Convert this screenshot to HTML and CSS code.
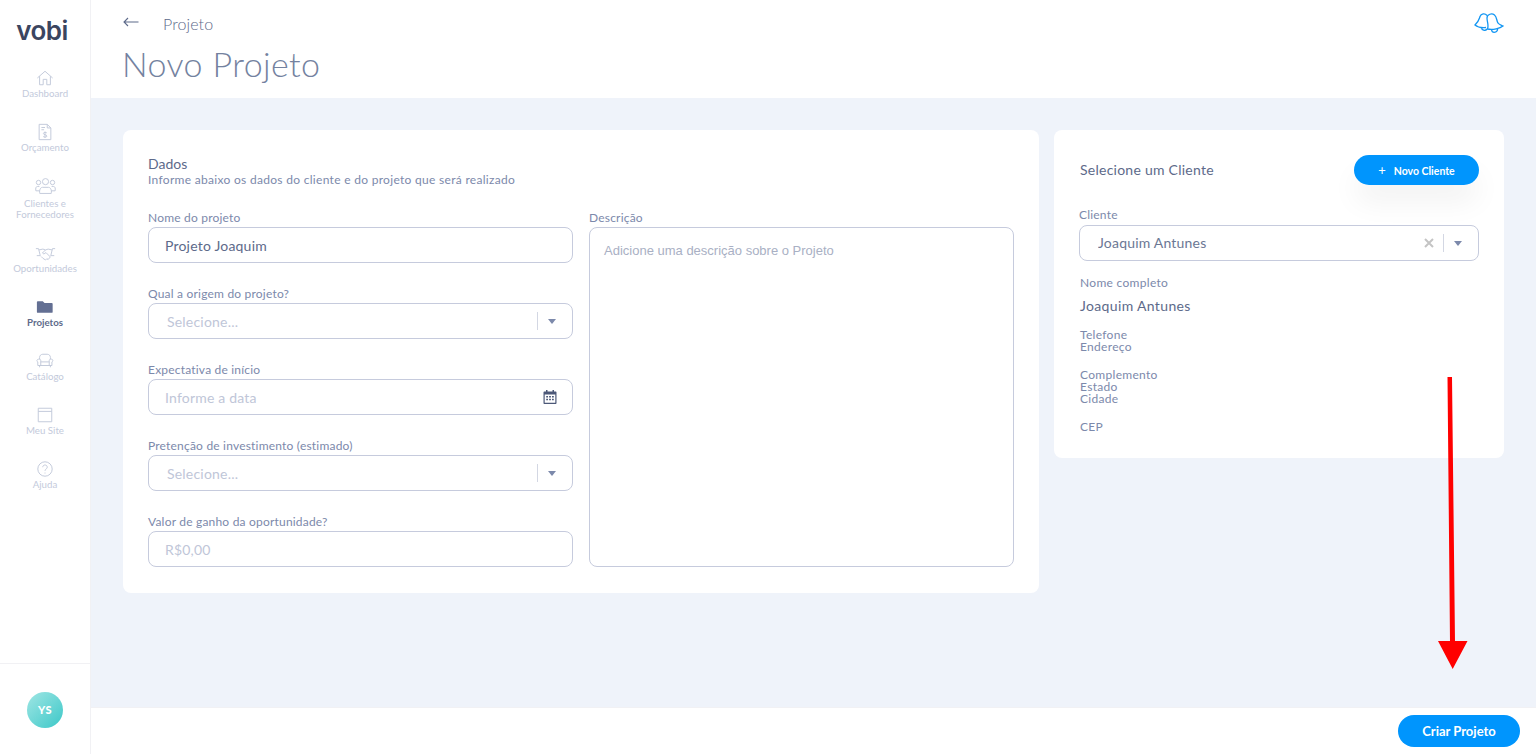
FILE: index.html
```html
<!DOCTYPE html>
<html lang="pt-BR">
<head>
    <meta charset="UTF-8">
    <meta name="viewport" content="width=device-width, initial-scale=1.0">
    <title>Novo Projeto</title>
    <link rel="stylesheet" href="styles.css">
</head>
<body>
    <div class="app">
        <aside class="sidebar">
            <div class="logo">vobi</div>
            <nav class="menu">
                <a class="menu-item" href="#">
                    <svg class="menu-icon" viewBox="0 0 20 20"><path d="M1.500 10 10 2.500l8.500 7.500M4 8v9.500h4v-6h4v6h4V8"/></svg>
                    <span>Dashboard</span>
                </a>
                <a class="menu-item" href="#">
                    <svg class="menu-icon" viewBox="0 0 20 20"><path d="M3.500 1.500h9l4 4v13h-13zM12.500 1.500v4h4M6 5h4M6 7.500h3M10 9.500v7M12 11c-.5-.8-3.800-1-3.800.6 0 1.900 3.900 1 3.900 3 0 1.500-3.300 1.300-4.100.4"/></svg>
                    <span>Orçamento</span>
                </a>
                <a class="menu-item menu-item-tall" href="#">
                    <svg class="menu-icon menu-icon-wide" viewBox="0 0 24 20"><circle cx="12" cy="5" r="3.500"/><circle cx="4" cy="6" r="2.500"/><circle cx="20" cy="6" r="2.500"/><path d="M5.500 18.500c-1-4 1-7 3-7h7c2 0 4 3 3 7zM5 10.500H3c-2 0-2.500 2-2 5h4M19 10.500h2c2 0 2.500 2 2 5h-4"/></svg>
                    <span>Clientes e Fornecedores</span>
                </a>
                <a class="menu-item" href="#">
                    <svg class="menu-icon menu-icon-wide" viewBox="0 0 24 20"><path d="M1 5h3l2 8H2M23 5h-3l-2 8h4M4.500 6.500 9 5.500l3 1 3-1 4.500 1M12 6.500 8.500 10c1 1.500 2.500 1 4-.5l5 5-2.500 3-1.500-1-1.500 1.500-3-2-2-2"/></svg>
                    <span>Oportunidades</span>
                </a>
                <a class="menu-item menu-item-active" href="#">
                    <svg class="menu-icon menu-icon-folder" viewBox="0 0 20 20"><path d="M2 3.500h5.500l2 2h8c.6 0 1 .4 1 1v9c0 .6-.4 1-1 1H2c-.6 0-1-.4-1-1v-11c0-.6.400-1 1-1z"/></svg>
                    <span>Projetos</span>
                </a>
                <a class="menu-item" href="#">
                    <svg class="menu-icon" viewBox="0 0 20 20"><path d="M4 8V6c0-2 1.500-3.500 3.500-3.500h5C14.500 2.500 16 4 16 6v2M2.800 8h1c1 0 1.500.7 1.500 1.500V11h9.400V9.500c0-.8.5-1.500 1.500-1.500h1c1 0 1.500.8 1.500 1.500 0 .8-.5 1.300-1 1.500v4H2v-4c-.6-.2-1-.7-1-1.500C1 8.800 1.800 8 2.800 8zM5.300 11v4M14.700 11v4M4 15v2M16 15v2"/></svg>
                    <span>Catálogo</span>
                </a>
                <a class="menu-item" href="#">
                    <svg class="menu-icon" viewBox="0 0 20 20"><path d="M2.500 2.500h15v15h-15zM2.500 6h15"/></svg>
                    <span>Meu Site</span>
                </a>
                <a class="menu-item" href="#">
                    <svg class="menu-icon" viewBox="0 0 20 20"><circle cx="10" cy="10" r="8"/><path d="M7.500 8c0-3.300 5-3.300 5 0 0 2-2.500 2-2.500 4M10 14v1"/></svg>
                    <span>Ajuda</span>
                </a>
            </nav>
            <div class="user-box">
                <div class="avatar">YS</div>
            </div>
        </aside>

        <div class="main">
            <header class="topbar">
                <div class="topbar-left">
                    <div class="crumb">
                        <svg class="back-icon" viewBox="0 0 16 10"><path d="M15.500 5H1M5 1 1 5l4 4"/></svg>
                        <span>Projeto</span>
                    </div>
                    <h1>Novo Projeto</h1>
                </div>
                <svg class="bell-icon" viewBox="0 0 30 22"><path d="M13 2.500C11 0 7 .5 6 3.500 5 6.500 5 8 1 12c3 2.500 7 3 11 2.500M7.500 14.500a3 2.800 0 0 0 5.500 1.500"/><path d="M13 5c0-4 5-5 7.500-3 2.500 2 2 6 3.500 8 1 1.500 3 2 5 3-3 2.500-10 4-15.500 3 1.500-4-.5-7-.5-11zM17.500 16.800a3 3 0 0 0 6-1.200"/></svg>
            </header>

            <div class="content">
                <section class="card card-data">
                    <h2 class="card-title">Dados</h2>
                    <p class="card-sub">Informe abaixo os dados do cliente e do projeto que será realizado</p>
                    <div class="form-cols">
                        <div class="form-col">
                            <div class="field">
                                <label>Nome do projeto</label>
                                <div class="input input-filled">Projeto Joaquim</div>
                            </div>
                            <div class="field">
                                <label>Qual a origem do projeto?</label>
                                <div class="input input-select">
                                    <span class="placeholder">Selecione...</span>
                                    <span class="sep"></span>
                                    <span class="caret"></span>
                                </div>
                            </div>
                            <div class="field">
                                <label>Expectativa de início</label>
                                <div class="input input-date">
                                    <span class="placeholder">Informe a data</span>
                                    <svg class="cal-icon" viewBox="0 0 14 14"><path fill-rule="evenodd" d="M3 0h1.500v1.500h5V0H11v1.500h1.500c.6 0 1 .4 1 1V13c0 .6-.4 1-1 1h-11c-.6 0-1-.4-1-1V2.500c0-.6.4-1 1-1H3zM1.700 4.500v8.300h10.600V4.500zM3.200 6h1.800v1.500H3.200zM6.100 6h1.800v1.500H6.100zM9 6h1.800v1.500H9zM3.200 8.800h1.800v1.500H3.200zM6.100 8.800h1.800v1.500H6.100zM9 8.800h1.800v1.500H9z"/></svg>
                                </div>
                            </div>
                            <div class="field">
                                <label>Pretenção de investimento (estimado)</label>
                                <div class="input input-select">
                                    <span class="placeholder">Selecione...</span>
                                    <span class="sep"></span>
                                    <span class="caret"></span>
                                </div>
                            </div>
                            <div class="field">
                                <label>Valor de ganho da oportunidade?</label>
                                <div class="input"><span class="placeholder">R$0,00</span></div>
                            </div>
                        </div>
                        <div class="form-col">
                            <div class="field field-grow">
                                <label>Descrição</label>
                                <div class="textarea">Adicione uma descrição sobre o Projeto</div>
                            </div>
                        </div>
                    </div>
                </section>

                <section class="card card-client">
                    <div class="client-head">
                        <h2 class="client-title">Selecione um Cliente</h2>
                        <button class="btn btn-new" type="button"><span class="plus">+</span>Novo Cliente</button>
                    </div>
                    <div class="field">
                        <label>Cliente</label>
                        <div class="input input-client">
                            <span class="client-value">Joaquim Antunes</span>
                            <svg class="clear" viewBox="0 0 10 10"><path d="M1 1l8 8M9 1 1 9"/></svg>
                            <span class="sep"></span>
                            <span class="caret"></span>
                        </div>
                    </div>
                    <div class="info">
                        <div class="info-label">Nome completo</div>
                        <div class="info-value">Joaquim Antunes</div>
                        <div class="info-label info-phone">Telefone</div>
                        <div class="info-label">Endereço</div>
                        <div class="info-label info-gap">Complemento</div>
                        <div class="info-label">Estado</div>
                        <div class="info-label">Cidade</div>
                        <div class="info-label info-gap">CEP</div>
                    </div>
                </section>
            </div>

            <footer class="footer">
                <button class="btn btn-create" type="button">Criar Projeto</button>
            </footer>
        </div>
    </div>

    <svg class="arrow" viewBox="0 0 30 293"><path d="M9.500 0H14l3 264h12.500L14.700 292 0 264h12z" fill="#ff0000"/></svg>
</body>
</html>
```

FILE: styles.css
```css
* {
    box-sizing: border-box;
}
html, body {
    margin: 0;
    height: 100%;
    overflow: hidden;
}
body {
    font-family: "Lato", "Noto Sans", sans-serif;
    color: #5d6a8a;
    background: #fff;
}
.app {
    display: flex;
    height: 754px;
}

/* menu lateral */
.sidebar {
    width: 91px;
    flex: none;
    display: flex;
    flex-direction: column;
    border-right: 1px solid #f1f1f4;
    background: #fff;
}
.logo {
    height: 61px;
    padding: 15px 6px 0 0;
    text-align: center;
    font-family: "Inter", sans-serif;
    font-size: 26px;
    font-weight: 600;
    letter-spacing: -0.5px;
    color: #3b4560;
}
.menu {
    flex: 1;
    display: flex;
    flex-direction: column;
}
.menu-item {
    display: flex;
    flex-direction: column;
    align-items: center;
    height: 54px;
    padding-top: 8px;
    text-align: center;
    text-decoration: none;
    font-size: 9.7px;
    line-height: 11px;
    color: #c3cadb;
}
.menu-item-tall {
    height: 67px;
}
.menu-item span {
    margin-top: 1px;
}
.menu-item-tall span {
    margin-top: 3px;
}
.menu-icon {
    width: 18px;
    height: 18px;
    fill: none;
    stroke: #c3cadb;
    stroke-width: 1.1;
    flex: none;
}
.menu-icon-wide {
    width: 21px;
}
.menu-item-active {
    color: #5d6a8a;
    font-weight: 700;
}
.menu-icon-folder {
    fill: #636f93;
    stroke: none;
}
.user-box {
    height: 91px;
    border-top: 1px solid #f1f1f4;
    display: flex;
    justify-content: center;
    padding-top: 28px;
}
.avatar {
    width: 36px;
    height: 36px;
    border-radius: 50%;
    background: linear-gradient(135deg, #a0e6e4, #3cc8c8);
    color: #fff;
    font-size: 11px;
    font-weight: 900;
    letter-spacing: 0.5px;
    text-align: center;
    line-height: 35px;
}

/* cabecalho */
.main {
    flex: 1;
    display: flex;
    flex-direction: column;
    min-width: 0;
}
.topbar {
    height: 98px;
    flex: none;
    display: flex;
    justify-content: space-between;
    padding: 0 32px;
    background: #fff;
}
.crumb {
    display: flex;
    align-items: center;
    gap: 24px;
    height: 24px;
    margin-top: 11px;
    font-size: 16px;
    font-weight: 300;
    letter-spacing: 0.1px;
    color: #5d6a8a;
}
.back-icon {
    width: 16px;
    height: 10px;
    margin-top: -3px;
    fill: none;
    stroke: #5d6a8a;
    stroke-width: 1.1;
}
h1 {
    margin: 7px 0 0 -1px;
    font-size: 34px;
    line-height: 44px;
    font-weight: 300;
    letter-spacing: 0.4px;
    color: #74829f;
}
.bell-icon {
    width: 30px;
    height: 22px;
    margin: 13px 0 0;
    fill: none;
    stroke: #1296f3;
    stroke-width: 1.300;
}

/* area principal */
.content {
    flex: 1;
    display: flex;
    align-items: flex-start;
    gap: 15px;
    padding: 32px 32px 0;
    background: #eff3fa;
}
.card {
    background: #fff;
    border-radius: 8px;
}
.card-data {
    width: 916px;
    height: 463px;
    flex: none;
    padding: 26px 25px;
}
.card-title {
    margin: 0;
    font-size: 14px;
    line-height: 16px;
    font-weight: 400;
    color: #5d6a8a;
}
.card-sub {
    margin: 0;
    font-size: 12px;
    line-height: 16px;
    letter-spacing: 0.3px;
    color: #7c89ab;
}
.form-cols {
    display: grid;
    grid-template-columns: 425px 425px;
    gap: 16px;
    margin-top: 22px;
}
.field {
    margin-bottom: 23px;
}
.form-col .field:last-child {
    margin-bottom: 0;
}
label {
    display: block;
    font-size: 12px;
    line-height: 16px;
    letter-spacing: 0.2px;
    margin-bottom: 1px;
    color: #7c89ab;
}
.input {
    display: flex;
    align-items: center;
    height: 36px;
    padding: 0 16px;
    border: 1px solid #c6cbdd;
    border-radius: 8px;
    font-size: 14px;
    letter-spacing: 0.2px;
    background: #fff;
}
.input-filled {
    color: #5d6a8a;
}
.placeholder {
    color: #c0c6d8;
    flex: 1;
}
.input-select {
    padding-left: 18px;
}
.input-date {
    padding-right: 15px;
}
.sep {
    width: 1px;
    height: 18px;
    background: #d3d7e3;
    margin-right: 10px;
}
.caret {
    width: 0;
    height: 0;
    border-left: 4px solid transparent;
    border-right: 4px solid transparent;
    border-top: 5px solid #7c89ab;
}
.cal-icon {
    width: 14px;
    height: 14px;
    fill: #4c5878;
}
.field-grow {
    height: 100%;
    margin: 0;
}
.textarea {
    height: 340px;
    padding: 15px 14px;
    border: 1px solid #c6cbdd;
    border-radius: 8px;
    font-family: "Liberation Sans", Arial, sans-serif;
    font-size: 13px;
    line-height: 15px;
    color: #a9b0c4;
}

/* cliente */
.card-client {
    width: 450px;
    height: 328px;
    flex: none;
    padding: 25px;
}
.client-head {
    display: flex;
    align-items: center;
    justify-content: space-between;
    height: 30px;
    margin-bottom: 22px;
}
.client-title {
    margin: -1px 0 0 1px;
    font-size: 14px;
    font-weight: 400;
    letter-spacing: 0.25px;
    color: #5d6a8a;
}
.btn {
    border: none;
    border-radius: 16px;
    background: #0095fd;
    color: #fff;
    font-family: inherit;
    font-weight: 700;
    cursor: pointer;
}
.btn-new {
    width: 125px;
    height: 30px;
    font-size: 10.5px;
    box-shadow: 0 18px 28px rgba(0, 0, 0, 0.05);
}
.plus {
    font-weight: 400;
    font-size: 13px;
    margin-right: 8px;
}
.card-client .field {
    margin-bottom: 0;
}
.card-client label {
    margin-bottom: 2px;
}
.input-client {
    padding-left: 18px;
}
.client-value {
    flex: 1;
    overflow: hidden;
    padding-bottom: 2px;
    color: #6b7794;
}
.clear {
    width: 10px;
    height: 10px;
    margin-right: 9px;
    fill: none;
    stroke: #c4c4c4;
    stroke-width: 2;
}
.info {
    margin: 16px 0 0 1px;
    font-size: 12px;
    line-height: 12px;
    letter-spacing: 0.3px;
    color: #7c89ab;
}
.info-value {
    font-size: 14px;
    line-height: 16px;
    letter-spacing: 0.35px;
    margin-top: 9px;
    color: #5d6a8a;
}
.info-phone {
    margin-top: 15px;
}
.info-gap {
    margin-top: 16px;
}

/* rodape */
.footer {
    height: 47px;
    flex: none;
    display: flex;
    justify-content: flex-end;
    align-items: center;
    padding-right: 16px;
    background: #fff;
    border-top: 1px solid #f1f1f4;
}
.btn-create {
    width: 122px;
    height: 32px;
    font-size: 13px;
}

/* seta sobre a tela */
.arrow {
    position: absolute;
    left: 1438px;
    top: 377px;
    width: 30px;
    height: 293px;
}
```
